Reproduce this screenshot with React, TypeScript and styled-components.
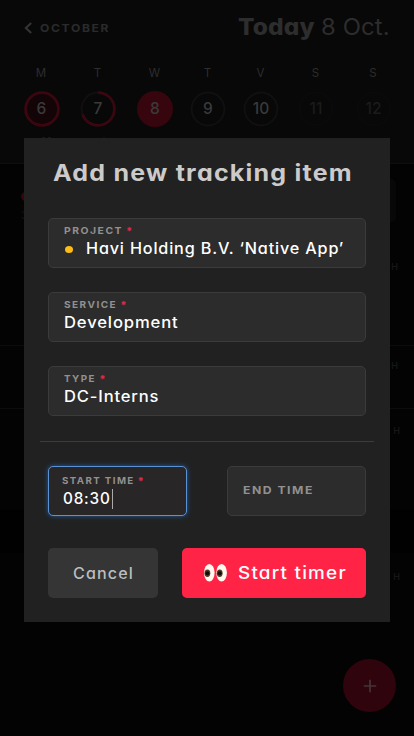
import React from "react";
import styled, { createGlobalStyle } from "styled-components";

const GlobalStyle = createGlobalStyle`
  * { box-sizing: border-box; }
  body {
    margin: 0;
    background: #030303;
    font-family: Inter, "Open Sans", sans-serif;
    font-feature-settings: "cv11";
    -webkit-font-smoothing: antialiased;
  }
  button, input { font: inherit; font-feature-settings: inherit; border: 0; padding: 0; margin: 0; }
`;

const Screen = styled.div`
  position: relative;
  width: 414px;
  height: 736px;
  overflow: hidden;
  background: #030303;
`;

/* Widened lettering; $grow reserves the extra advance in the line. */
const Wide = styled.span<{ $scale: number; $grow?: number }>`
  display: inline-block;
  transform: scaleX(${(p) => p.$scale});
  transform-origin: left center;
  margin-right: ${(p) => p.$grow ?? 0}px;
`;

const Header = styled.header`
  height: 164px;
  background: #080808;
  border-bottom: 1px solid #0e0e0e;
`;

const TitleBar = styled.div`
  display: flex;
  align-items: center;
  justify-content: space-between;
  height: 56px;
  padding: 0 24px;
`;

const MonthLink = styled.div`
  display: flex;
  align-items: center;
  gap: 7px;
  color: #2b2b2b;
  font-size: 11px;
  font-weight: 700;
  letter-spacing: 1.5px;
  line-height: 16px;
`;

const Today = styled.div`
  color: #2d2d2d;
  font-size: 22.5px;
  line-height: 30px;
  letter-spacing: 0.1px;
  margin: -2px 0 0;
  b { font-weight: 800; }
`;

const Week = styled.div`
  display: grid;
  grid-template-columns: 56px 57px 57px 49px 57px 53px 62px;
  padding: 8px 0 0 14px;
  justify-items: center;
`;

const Day = styled.div`
  display: flex;
  flex-direction: column;
  align-items: center;
`;

const DayName = styled.span`
  height: 18px;
  margin-left: -2px;
  line-height: 18px;
  font-size: 11.5px;
  color: #2d2d2d;
`;

const DayRing = styled.div<{ $kind: string }>`
  display: grid;
  place-items: center;
  width: 36px;
  height: 36px;
  margin: 9px 0 0 -1px;
  border-radius: 50%;
  background: ${(p) => (p.$kind === "full" ? "#37050e" : p.$kind === "done" ? "#130407" : "transparent")};
  > * { grid-area: 1 / 1; }
`;

const DayNumber = styled.span<{ $faint?: boolean }>`
  font-size: 15.5px;
  line-height: 18px;
  font-weight: 500;
  color: ${(p) => (p.$faint ? "#1b1b1b" : "#3a3a3a")};
`;

const Marks = styled.div`
  display: flex;
  gap: 3px;
  height: 2px;
  margin: 10px 0 0 42px;
  i { width: 3px; height: 2px; background: #241b08; border-radius: 1px; }
  i:last-child { margin-left: 49px; width: 2px; background: #141414; }
`;

const Entry = styled.section<{ $height: number; $line?: boolean; $bg?: string }>`
  height: ${(p) => p.$height}px;
  border-bottom: 1px solid ${(p) => (p.$line ? "#0c0c0c" : "transparent")};
  background: ${(p) => p.$bg ?? "transparent"};
  display: flex;
  justify-content: space-between;
`;

const Unit = styled.span<{ $top: number; $right: number }>`
  margin: ${(p) => p.$top}px ${(p) => p.$right}px 0 auto;
  font-size: 9px;
  line-height: 12px;
  font-weight: 600;
  color: #161616;
`;

const Marker = styled.div`
  width: 30px;
  padding: 28px 0 0 21px;
  color: #161616;
  font-size: 10px;
  line-height: 12px;
  &::before {
    content: "";
    display: block;
    width: 9px;
    height: 9px;
    margin-bottom: 8px;
    border-radius: 50%;
    background: #37050e;
  }
`;

const EntrySide = styled.div`
  display: flex;
  flex-direction: column;
  width: 70px;
  padding-top: 15px;
`;

const EntryButton = styled.div`
  width: 52px;
  height: 43px;
  border-radius: 5px;
  background: #080808;
`;

const AddButton = styled.button`
  position: absolute;
  left: 343px;
  top: 659px;
  width: 53px;
  height: 53px;
  border-radius: 50%;
  background: #30040d;
  display: grid;
  place-items: center;
`;

const Modal = styled.form`
  position: absolute;
  left: 24px;
  top: 138px;
  width: 366px;
  height: 484px;
  padding: 0 24px;
  background: #212121;
`;

const Title = styled.h1`
  margin: 0 0 0 5px;
  padding-top: 19px;
  height: 80px;
  font-size: 22.5px;
  line-height: 32px;
  font-weight: 700;
  letter-spacing: 1.1px;
  white-space: nowrap;
  color: #cdcaca;
`;

const Fields = styled.div`
  display: grid;
  gap: 24px;
`;

const Field = styled.label<{ $focused?: boolean }>`
  display: block;
  height: 50px;
  padding: ${(p) => (p.$focused ? "8px 0 0 13px" : "6px 0 0 15px")};
  border: 1px solid ${(p) => (p.$focused ? "#5b92d4" : "#3b3b3b")};
  border-radius: 5px;
  background: ${(p) => (p.$focused ? "#292627" : "#2c2c2c")};
  box-shadow: ${(p) => (p.$focused ? "0 0 5px #27599a" : "none")};
`;

const Label = styled.span<{ $size?: number }>`
  display: flex;
  align-items: center;
  font-size: ${(p) => p.$size ?? 9.3}px;
  line-height: 12px;
  height: 12px;
  font-weight: 700;
  letter-spacing: 1.35px;
  color: #929090;
  white-space: nowrap;
`;

const Required = styled.span`
  height: 10px;
  margin-left: 3px;
  color: #d52b48;
  font-size: 10.5px;
  font-weight: 900;
  line-height: 12px;
`;

const Value = styled.span<{ $inset?: number }>`
  display: flex;
  align-items: center;
  height: 20px;
  margin-top: 2px;
  padding-left: ${(p) => p.$inset ?? 0}px;
  font-size: 15.3px;
  line-height: 20px;
  font-weight: 500;
  letter-spacing: 0.8px;
  white-space: nowrap;
  color: #fff;
`;

const Bullet = styled.i`
  width: 8px;
  height: 7px;
  margin: 1px 13px 0 1px;
  border-radius: 50%;
  background: #fdbd14;
`;

const Caret = styled.i`
  width: 1px;
  height: 20px;
  margin-left: 1px;
  background: #aaa;
`;

const Divider = styled.hr`
  height: 1px;
  margin: 25px -8px 24px;
  border: 0;
  background: #3c3c3c;
`;

const Times = styled.div`
  display: grid;
  grid-template-columns: 139px 139px;
  justify-content: space-between;
`;

const EmptyField = styled(Field)`
  padding: 17px 0 0 15px;
`;

const Actions = styled.div`
  display: grid;
  grid-template-columns: 110px 184px;
  gap: 24px;
  margin-top: 32px;
`;

const Button = styled.button<{ $primary?: boolean }>`
  display: flex;
  align-items: center;
  justify-content: center;
  gap: 10px;
  height: 50px;
  border-radius: 5px;
  font-size: ${(p) => (p.$primary ? 17 : 15.3)}px;
  font-weight: 500;
  letter-spacing: 1.1px;
  white-space: nowrap;
  color: ${(p) => (p.$primary ? "#fff" : "#bdbdbd")};
  background: ${(p) => (p.$primary ? "#ff2446" : "#353535")};
`;

const days = [
  { name: "M", num: 6, kind: "done" },
  { name: "T", num: 7, kind: "partial" },
  { name: "W", num: 8, kind: "full" },
  { name: "T", num: 9, kind: "empty" },
  { name: "V", num: 10, kind: "empty" },
  { name: "S", num: 11, kind: "off" },
  { name: "S", num: 12, kind: "off" },
];

const fields = [
  { label: "PROJECT", value: "Havi Holding B.V. ‘Native App’", labelScale: 1.115, grow: 6, scale: 1.057, bullet: true },
  { label: "SERVICE", value: "Development", labelScale: 1.08, grow: 4, scale: 1.085 },
  { label: "TYPE", value: "DC-Interns", labelScale: 1.06, grow: 2, scale: 1.08 },
];

function Ring({ kind }: { kind: string }) {
  if (kind === "full") return null;
  const base = kind === "done" ? "#3a0711" : kind === "off" ? "#0a0a0a" : "#101010";
  return (
    <svg width="36" height="36" viewBox="0 0 36 36" fill="none">
      <circle cx="18" cy="18" r="16.4" stroke={base} strokeWidth={kind === "done" ? 2.8 : 2} />
      {kind === "partial" && <path d="M18 1.6A16.4 16.4 0 1 1 2.5 23.3" stroke="#3a0711" strokeWidth="2.8" />}
    </svg>
  );
}

function Eyes() {
  return (
    <svg width="25" height="20" viewBox="0 0 25 20">
      <ellipse cx="6.3" cy="9.8" rx="5.3" ry="8.8" fill="#fff8ee" />
      <ellipse cx="18.6" cy="9.8" rx="5.3" ry="8.8" fill="#fff8ee" />
      <ellipse cx="4.4" cy="10.3" rx="2.9" ry="3.7" fill="#55391d" />
      <ellipse cx="16.7" cy="10.3" rx="2.9" ry="3.7" fill="#55391d" />
      <circle cx="4.4" cy="10.3" r="2" fill="#100e0c" />
      <circle cx="16.7" cy="10.3" r="2" fill="#100e0c" />
    </svg>
  );
}

export default function App() {
  return (
    <>
      <GlobalStyle />
      <Screen>
        <Header>
          <TitleBar>
            <MonthLink>
              <svg width="9" height="12" viewBox="0 0 9 12" fill="none">
                <path d="M7.2 1L1.8 6l5.4 5" stroke="#353535" strokeWidth="2" />
              </svg>
              <Wide $scale={1.1}>OCTOBER</Wide>
            </MonthLink>
            <Today>
              <Wide as="b" $scale={1.087} $grow={6}>Today</Wide>{" "}
              <Wide $scale={1.06} $grow={4}>8 Oct.</Wide>
            </Today>
          </TitleBar>
          <Week>
            {days.map((d, i) => (
              <Day key={i}>
                <DayName>{d.name}</DayName>
                <DayRing $kind={d.kind}>
                  <Ring kind={d.kind} />
                  <DayNumber $faint={d.kind === "off"}>{d.num}</DayNumber>
                </DayRing>
              </Day>
            ))}
          </Week>
          <Marks><i /><i /><i /></Marks>
        </Header>
        <Entry $height={182} $line>
          <Marker>3</Marker>
          <EntrySide>
            <EntryButton />
            <Unit $top={39} $right={16}>H</Unit>
          </EntrySide>
        </Entry>
        <Entry $height={63} $line><Unit $top={14} $right={16}>H</Unit></Entry>
        <Entry $height={101}><Unit $top={16} $right={14}>H</Unit></Entry>
        <Entry $height={43} $bg="#010101" />
        <Entry $height={180}><Unit $top={18} $right={14}>H</Unit></Entry>
        <AddButton type="button" aria-label="Add">
          <svg width="14" height="14" viewBox="0 0 14 14" stroke="#443538" strokeWidth="1.7">
            <path d="M7 .8v12.4M.8 7h12.4" />
          </svg>
        </AddButton>
        <Modal>
          <Title><Wide $scale={1.112}>Add new tracking item</Wide></Title>
          <Fields>
            {fields.map((f) => (
              <Field key={f.label}>
                <Label>
                  <Wide $scale={f.labelScale} $grow={f.grow}>{f.label}</Wide>
                  <Required>*</Required>
                </Label>
                <Value>
                  {f.bullet && <Bullet />}
                  <Wide $scale={f.scale}>{f.value}</Wide>
                </Value>
              </Field>
            ))}
          </Fields>
          <Divider />
          <Times>
            <Field $focused>
              <Label>
                <Wide $scale={1.045} $grow={3}>START TIME</Wide>
                <Required>*</Required>
              </Label>
              <Value $inset={1}>08:30<Caret /></Value>
            </Field>
            <EmptyField><Label $size={11}><Wide $scale={1.11}>END TIME</Wide></Label></EmptyField>
          </Times>
          <Actions>
            <Button type="button"><Wide $scale={1.05} $grow={2}>Cancel</Wide></Button>
            <Button type="button" $primary><Eyes /><Wide $scale={1.11} $grow={8}>Start timer</Wide></Button>
          </Actions>
        </Modal>
      </Screen>
    </>
  );
}
